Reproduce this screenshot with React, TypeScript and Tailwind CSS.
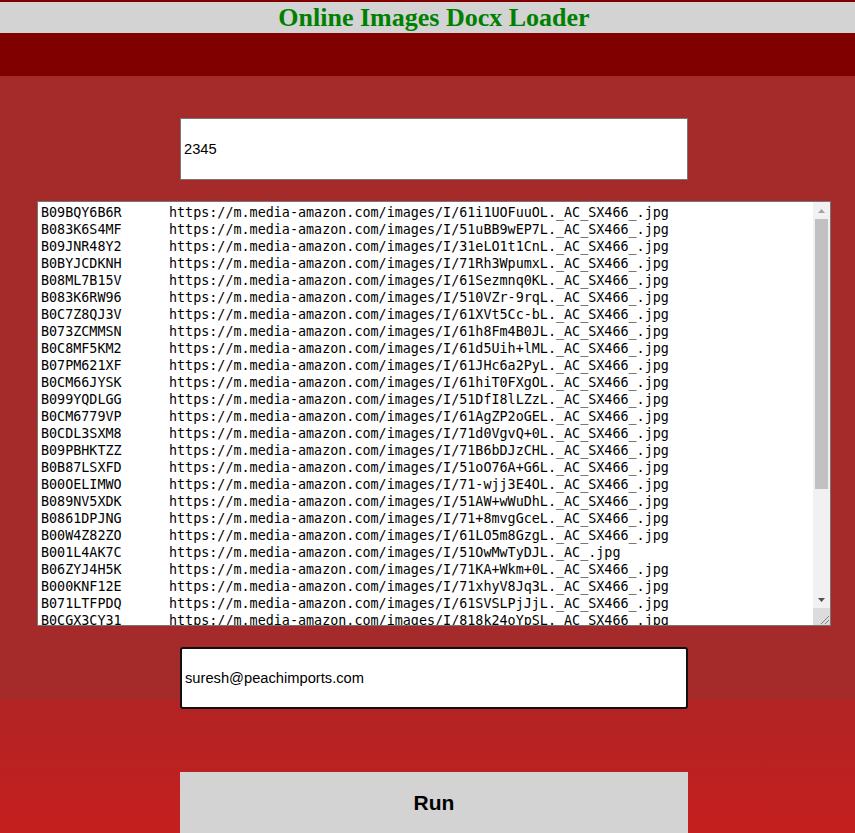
const rows: [string, string][] = [
  ['B09BQY6B6R', '61i1UOFuuOL._AC_SX466_.jpg'],
  ['B083K6S4MF', '51uBB9wEP7L._AC_SX466_.jpg'],
  ['B09JNR48Y2', '31eLO1t1CnL._AC_SX466_.jpg'],
  ['B0BYJCDKNH', '71Rh3WpumxL._AC_SX466_.jpg'],
  ['B08ML7B15V', '61Sezmnq0KL._AC_SX466_.jpg'],
  ['B083K6RW96', '510VZr-9rqL._AC_SX466_.jpg'],
  ['B0C7Z8QJ3V', '61XVt5Cc-bL._AC_SX466_.jpg'],
  ['B073ZCMMSN', '61h8Fm4B0JL._AC_SX466_.jpg'],
  ['B0C8MF5KM2', '61d5Uih+lML._AC_SX466_.jpg'],
  ['B07PM621XF', '61JHc6a2PyL._AC_SX466_.jpg'],
  ['B0CM66JYSK', '61hiT0FXgOL._AC_SX466_.jpg'],
  ['B099YQDLGG', '51DfI8lLZzL._AC_SX466_.jpg'],
  ['B0CM6779VP', '61AgZP2oGEL._AC_SX466_.jpg'],
  ['B0CDL3SXM8', '71d0VgvQ+0L._AC_SX466_.jpg'],
  ['B09PBHKTZZ', '71B6bDJzCHL._AC_SX466_.jpg'],
  ['B0B87LSXFD', '51oO76A+G6L._AC_SX466_.jpg'],
  ['B00OELIMWO', '71-wjj3E4OL._AC_SX466_.jpg'],
  ['B089NV5XDK', '51AW+wWuDhL._AC_SX466_.jpg'],
  ['B0861DPJNG', '71+8mvgGceL._AC_SX466_.jpg'],
  ['B00W4Z82ZO', '61LO5m8GzgL._AC_SX466_.jpg'],
  ['B001L4AK7C', '51OwMwTyDJL._AC_.jpg'],
  ['B06ZYJ4H5K', '71KA+Wkm+0L._AC_SX466_.jpg'],
  ['B000KNF12E', '71xhyV8Jq3L._AC_SX466_.jpg'],
  ['B071LTFPDQ', '61SVSLPjJjL._AC_SX466_.jpg'],
  ['B0CGX3CY31', '818k24oYpSL._AC_SX466_.jpg'],
  ['B0BX4WQ2TM', '61qAc9Zr3nL._AC_SX466_.jpg'],
];

// fake textarea so the scrollbar looks the same everywhere
function ListBox() {
  const text = rows.map(([id, img]) => `${id}\thttps://m.media-amazon.com/images/I/${img}`).join('\n');
  return (
    <div className="flex h-[425px] w-[794px] border border-[#767676] bg-white">
      <div className="flex-1 overflow-hidden pl-[3px] pt-[2px]">
        <pre className="whitespace-pre font-['DejaVu_Sans_Mono',monospace] text-[13.4px] leading-[17px] text-black [tab-size:128px]">
          {text}
        </pre>
      </div>
      <div className="flex w-[17px] flex-col bg-[#f1f1f1]">
        <div className="flex h-[17px] items-center justify-center">
          <svg width="7" height="4" viewBox="0 0 7 4">
            <path d="M0 4 L3.5 0 L7 4 Z" fill="#a3a3a3" />
          </svg>
        </div>
        <div className="px-[2px]">
          <div className="h-[270px] bg-[#c1c1c1]" />
        </div>
        <div className="flex-1" />
        <div className="flex h-[17px] items-center justify-center">
          <svg width="7" height="4" viewBox="0 0 7 4">
            <path d="M0 0 L7 0 L3.5 4 Z" fill="#505050" />
          </svg>
        </div>
        <div className="flex h-[17px] items-end justify-end bg-[#dcdcdc]">
          <svg width="10" height="10" viewBox="0 0 10 10">
            <path d="M1 9 L9 1 M5 9 L9 5" stroke="#808080" strokeWidth="1" />
          </svg>
        </div>
      </div>
    </div>
  );
}

export default function App() {
  return (
    <div className="min-h-screen bg-[#c51f1f] font-['Liberation_Sans',Arial,sans-serif]">
      <div className="h-[2px] bg-[#800000]" />
      <header className="flex h-[31px] items-center justify-center bg-[#d3d3d3] pl-[13px]">
        <h1 className="font-['Liberation_Serif','Times_New_Roman',serif] text-[26px] leading-[31px] font-bold text-[#008000]">
          Online Images Docx Loader
        </h1>
      </header>
      <div className="h-[43px] bg-[#800000]" />
      <main className="flex min-h-[757px] flex-col items-center bg-[linear-gradient(to_bottom,#a52a2a_624px,#b22424_624px,#c51f1f_757px)] pl-[13px] pt-[42px]">
        <input
          readOnly
          defaultValue="2345"
          className="h-[62px] w-[508px] border border-[#767676] bg-white px-[3px] text-[14.7px] text-black outline-none"
        />
        <div className="mt-[21px]">
          <ListBox />
        </div>
        <input
          readOnly
          defaultValue="suresh@peachimports.com"
          className="mt-[21px] h-[62px] w-[508px] rounded-[3px] border-2 border-[#101010] bg-white px-[3px] text-[14.7px] text-black outline-none"
        />
        <button className="mt-[63px] h-[62px] w-[508px] bg-[#d3d3d3] text-[21px] font-bold text-black">
          Run
        </button>
      </main>
    </div>
  );
}
